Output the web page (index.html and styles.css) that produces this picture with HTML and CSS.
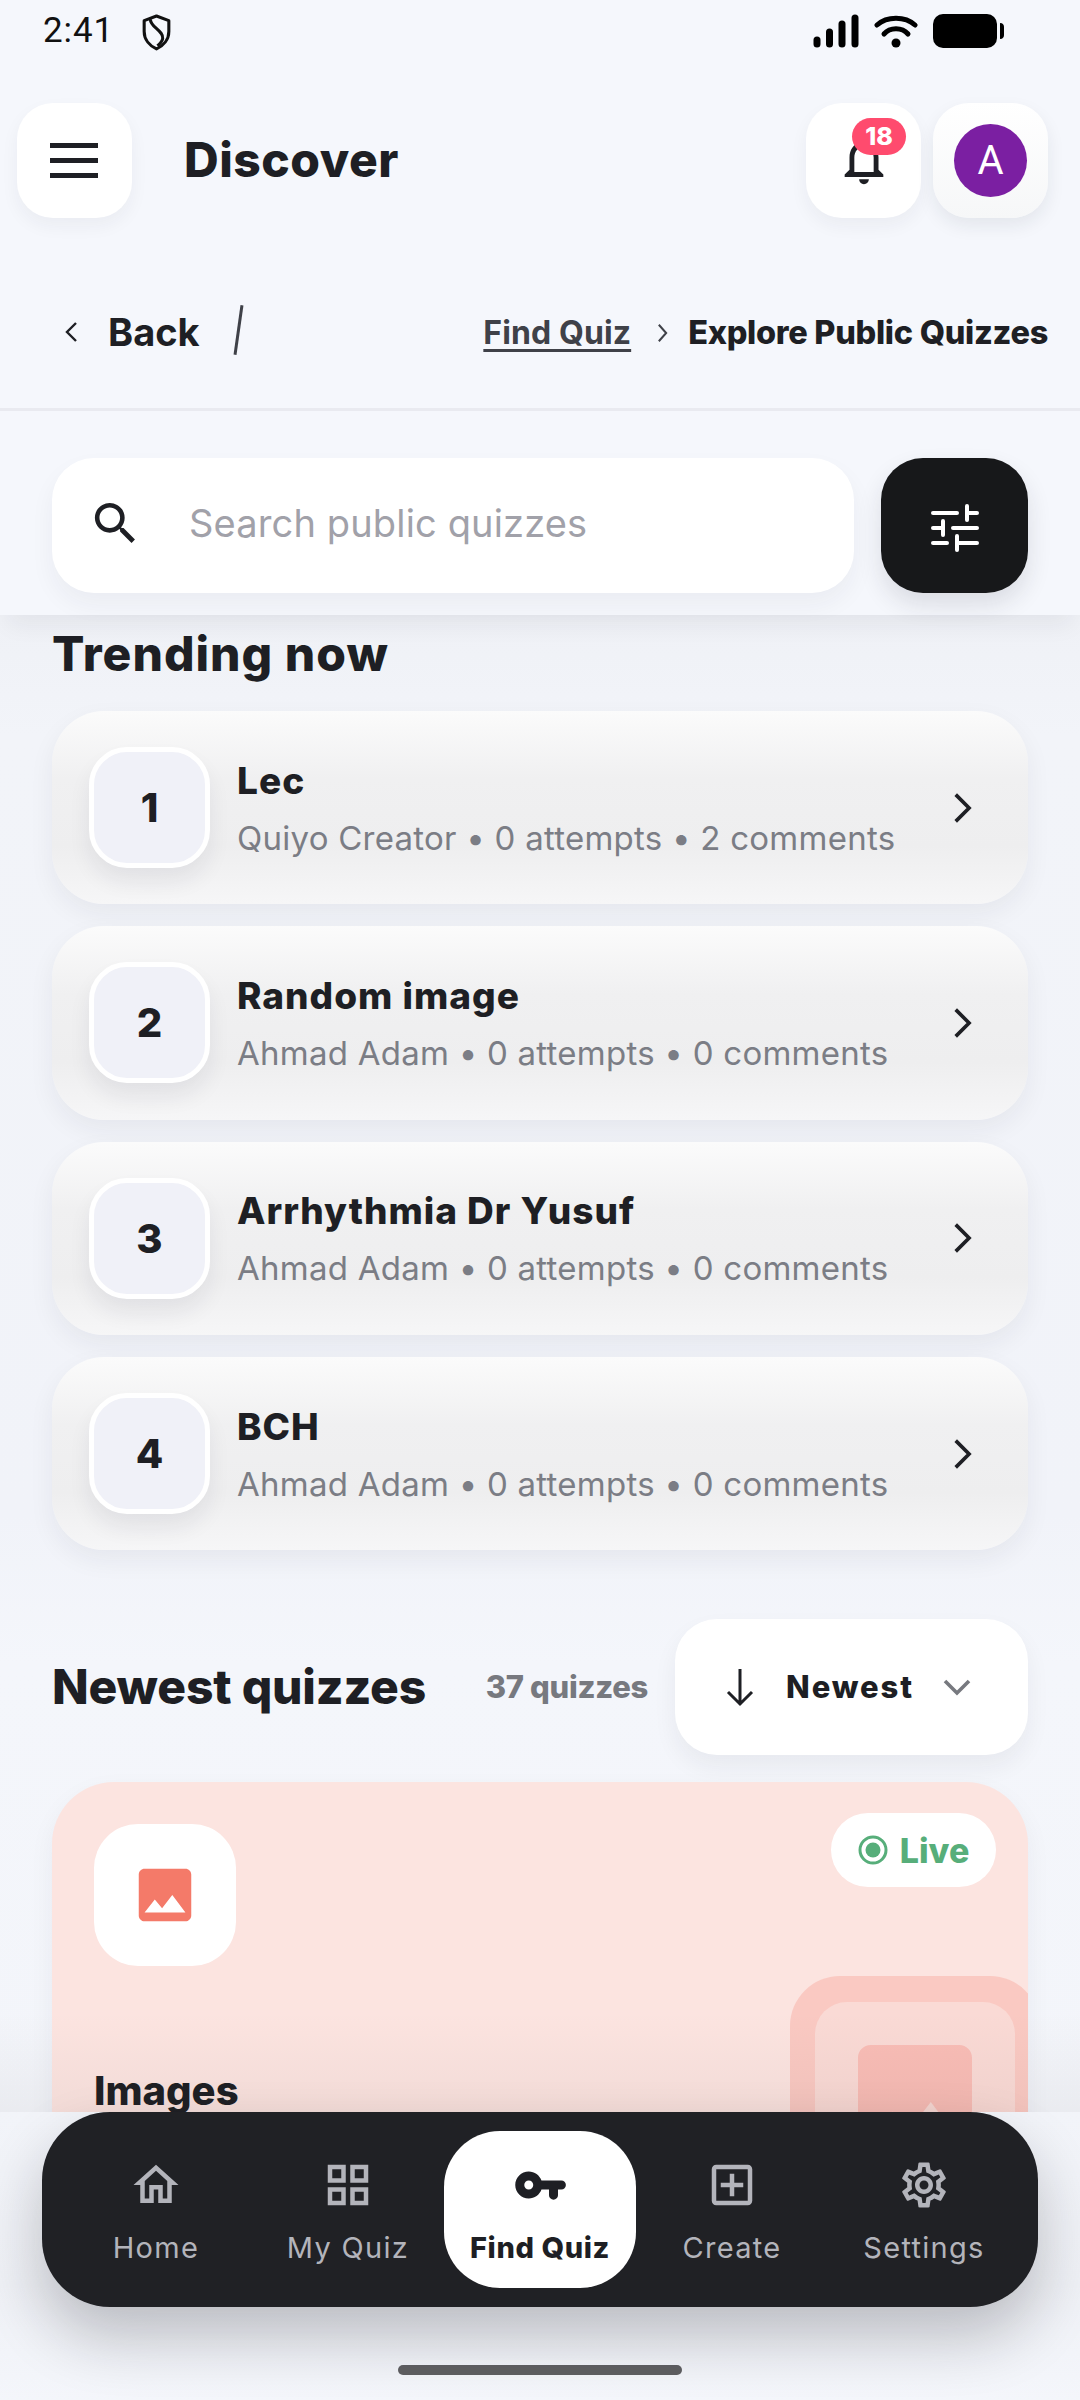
FILE: index.html
```html
<!DOCTYPE html>
<html lang="en">
<head>
<meta charset="utf-8">
<title>Discover</title>
<link rel="stylesheet" href="styles.css">
</head>
<body>
<div class="app">
  <div class="status">
    <div class="status-left">
      <span class="time">2:41</span>
      <svg class="shield" viewBox="0 0 30 36"><path d="M15 2 L27 6.5 V17 C27 25 21.500 31 15 34 C8.500 31 3 25 3 17 V6.500 Z" fill="none" stroke="#111" stroke-width="3" stroke-linejoin="round"/><path d="M9 5 C9 13 22 16 21 24 C20.700 27 18 29 16 31" fill="none" stroke="#111" stroke-width="3"/></svg>
    </div>
    <div class="status-right">
      <svg class="signal" viewBox="0 0 46 34"><g stroke="#000" stroke-width="7" stroke-linecap="round"><path d="M4 26V30"/><path d="M16.500 18V30"/><path d="M29 10V30"/><path d="M42 4V30"/></g></svg>
      <svg class="wifi" viewBox="0 0 44 34"><g fill="none" stroke="#000" stroke-linecap="round"><path d="M3 11 C13 2 31 2 41 11" stroke-width="5"/><path d="M10 20 C16 13 28 13 34 20" stroke-width="5"/></g><circle cx="22" cy="29" r="4.500" fill="#000"/></svg>
      <svg class="battery" viewBox="0 0 72 34"><rect x="0" y="0" width="64" height="34" rx="10" fill="#000"/><path d="M67 9 C70 9 71 11 71 13 V21 C71 23 70 25 67 25 Z" fill="#000"/></svg>
    </div>
  </div>

  <header class="topbar">
    <button class="tile tile-menu" aria-label="Menu"><span class="bars"><i></i><i></i><i></i></span></button>
    <h1 class="page-title">Discover</h1>
    <div class="top-actions">
      <button class="tile tile-bell" aria-label="Notifications">
        <svg class="bell" viewBox="0 0 24 24"><path d="M12 22c1.100 0 2-.9 2-2h-4c0 1.100.9 2 2 2zm6-6v-5c0-3.070-1.640-5.640-4.500-6.320V4c0-.83-.67-1.500-1.500-1.500s-1.500.67-1.500 1.500v.68C7.630 5.360 6 7.920 6 11v5l-2 2v1h16v-1l-2-2zm-2 1H8v-6c0-2.480 1.510-4.500 4-4.500s4 2.020 4 4.500v6z"/></svg>
        <span class="badge">18</span>
      </button>
      <button class="tile tile-avatar" aria-label="Account"><span class="avatar">A</span></button>
    </div>
  </header>

  <nav class="crumbs">
    <div class="crumbs-left">
      <svg class="chev-back" viewBox="0 0 14 24"><path d="M12 3 L3 12 L12 21" fill="none" stroke="#1e1f24" stroke-width="2.400"/></svg>
      <span class="back">Back</span>
      <span class="slash"></span>
    </div>
    <div class="crumbs-right">
      <span class="crumb-link">Find Quiz</span>
      <svg class="chev-crumb" viewBox="0 0 14 24"><path d="M3 3 L11 12 L3 21" fill="none" stroke="#3f4148" stroke-width="2.200"/></svg>
      <span class="crumb-current">Explore Public Quizzes</span>
    </div>
  </nav>

  <section class="search-row">
    <div class="search">
      <svg class="search-icon" viewBox="0 0 24 24"><path d="M15.500 14h-.79l-.28-.27C15.410 12.590 16 11.110 16 9.500 16 5.910 13.090 3 9.500 3S3 5.910 3 9.500 5.910 16 9.500 16c1.610 0 3.090-.59 4.230-1.570l.27.28v.79l5 4.990L20.490 19l-4.990-5zm-6 0C7.010 14 5 11.990 5 9.500S7.010 5 9.500 5 14 7.010 14 9.500 11.990 14 9.500 14z"/></svg>
      <span class="placeholder">Search public quizzes</span>
    </div>
    <button class="filter" aria-label="Filter">
      <svg viewBox="0 0 48 48"><g stroke="#fff" stroke-width="4" stroke-linecap="round" fill="none"><path d="M2 11H26"/><path d="M36 11H46"/><path d="M36 4V18"/><path d="M2 26H12"/><path d="M22 26H46"/><path d="M12 19V33"/><path d="M2 41H16"/><path d="M26 41H46"/><path d="M26 34V48"/></g></svg>
    </button>
  </section>

  <main class="scroll">
    <h2 class="section-title trending-title">Trending now</h2>
    <div class="trend-list">
      <article class="trend">
        <div class="rank">1</div>
        <div class="trend-body"><h3>Lec</h3><p>Quiyo Creator • 0 attempts • 2 comments</p></div>
        <svg class="chev-row" viewBox="0 0 18 28"><path d="M3 3 L14 14 L3 25" fill="none" stroke="#1e1f24" stroke-width="3"/></svg>
      </article>
      <article class="trend">
        <div class="rank">2</div>
        <div class="trend-body"><h3>Random image</h3><p>Ahmad Adam • 0 attempts • 0 comments</p></div>
        <svg class="chev-row" viewBox="0 0 18 28"><path d="M3 3 L14 14 L3 25" fill="none" stroke="#1e1f24" stroke-width="3"/></svg>
      </article>
      <article class="trend">
        <div class="rank">3</div>
        <div class="trend-body"><h3>Arrhythmia Dr Yusuf</h3><p>Ahmad Adam • 0 attempts • 0 comments</p></div>
        <svg class="chev-row" viewBox="0 0 18 28"><path d="M3 3 L14 14 L3 25" fill="none" stroke="#1e1f24" stroke-width="3"/></svg>
      </article>
      <article class="trend">
        <div class="rank">4</div>
        <div class="trend-body"><h3>BCH</h3><p>Ahmad Adam • 0 attempts • 0 comments</p></div>
        <svg class="chev-row" viewBox="0 0 18 28"><path d="M3 3 L14 14 L3 25" fill="none" stroke="#1e1f24" stroke-width="3"/></svg>
      </article>
    </div>

    <div class="newest-head">
      <h2 class="section-title">Newest quizzes</h2>
      <span class="count">37 quizzes</span>
      <button class="sort">
        <svg class="sort-arrow" viewBox="0 0 32 40"><path d="M16 2V36M4 25 L16 37 L28 25" fill="none" stroke="#1e1f24" stroke-width="3"/></svg>
        <span class="sort-label">Newest</span>
        <svg class="sort-chev" viewBox="0 0 28 18"><path d="M2 3 L14 15 L26 3" fill="none" stroke="#77797f" stroke-width="3.600"/></svg>
      </button>
    </div>

    <article class="quiz">
      <div class="quiz-top">
        <div class="quiz-icon">
          <svg viewBox="0 0 24 24"><path d="M21 19V5c0-1.100-.9-2-2-2H5c-1.100 0-2 .9-2 2v14c0 1.100.9 2 2 2h14c1.100 0 2-.9 2-2zM8.500 13.500l2.500 3.010L14.500 12l4.500 6H5l3.500-4.500z"/></svg>
        </div>
        <span class="live">
          <svg viewBox="0 0 30 30"><circle cx="15" cy="15" r="13" fill="none" stroke="#57ae7a" stroke-width="3"/><circle cx="15" cy="15" r="7.500" fill="#57ae7a"/></svg>
          Live
        </span>
      </div>
      <div class="art" aria-hidden="true">
        <div class="art-inner">
          <svg viewBox="0 0 24 24"><path d="M21 19V5c0-1.100-.9-2-2-2H5c-1.100 0-2 .9-2 2v14c0 1.100.9 2 2 2h14c1.100 0 2-.9 2-2zM8.500 13.500l2.500 3.010L14.500 12l4.500 6H5l3.500-4.500z"/></svg>
        </div>
      </div>
      <h3 class="quiz-title">Images</h3>
    </article>
  </main>

  <footer class="dock">
    <div class="tabs">
      <a class="tab">
        <svg viewBox="0 0 24 24"><path d="M12 5.690l5 4.500V18h-2v-6H9v6H7v-7.810l5-4.500M12 3L2 12h3v8h6v-6h2v6h6v-8h3L12 3z"/></svg>
        <span>Home</span>
      </a>
      <a class="tab">
        <svg viewBox="0 0 24 24"><path d="M3 3v8h8V3H3zm6 6H5V5h4v4zm-6 4v8h8v-8H3zm6 6H5v-4h4v4zm4-16v8h8V3h-8zm6 6h-4V5h4v4zm-6 4v8h8v-8h-8zm6 6h-4v-4h4v4z"/></svg>
        <span>My Quiz</span>
      </a>
      <a class="tab tab-active">
        <svg viewBox="0 0 24 24"><path d="M12.650 10C11.830 7.670 9.610 6 7 6c-3.310 0-6 2.690-6 6s2.690 6 6 6c2.610 0 4.830-1.670 5.650-4H16v2.500a2 2 0 0 0 4 0V14h1.500a2 2 0 0 0 0-4H12.650zM7 14c-1.100 0-2-.9-2-2s.9-2 2-2 2 .9 2 2-.9 2-2 2z"/></svg>
        <span>Find Quiz</span>
      </a>
      <a class="tab">
        <svg viewBox="0 0 24 24"><path d="M19 3H5c-1.100 0-2 .9-2 2v14c0 1.100.9 2 2 2h14c1.100 0 2-.9 2-2V5c0-1.100-.9-2-2-2zm0 16H5V5h14v14zm-8-2h2v-4h4v-2h-4V7h-2v4H7v2h4z"/></svg>
        <span>Create</span>
      </a>
      <a class="tab">
        <svg viewBox="0 0 24 24"><path d="M19.430 12.980c.04-.32.07-.64.07-.98 0-.34-.03-.66-.07-.98l2.110-1.650c.19-.15.24-.42.12-.64l-2-3.460c-.09-.16-.26-.25-.44-.25-.06 0-.12.01-.17.03l-2.490 1c-.52-.4-1.080-.73-1.690-.98l-.38-2.650C14.460 2.180 14.250 2 14 2h-4c-.25 0-.46.18-.49.42l-.38 2.650c-.61.25-1.170.59-1.690.98l-2.490-1c-.06-.02-.12-.03-.18-.03-.17 0-.34.09-.43.25l-2 3.460c-.13.22-.07.49.12.64l2.110 1.650c-.04.32-.07.65-.07.98 0 .33.03.66.07.98l-2.110 1.650c-.19.15-.24.42-.12.64l2 3.460c.09.16.26.25.44.25.06 0 .12-.01.17-.03l2.490-1c.52.4 1.080.73 1.690.98l.38 2.650c.03.24.24.42.49.42h4c.25 0 .46-.18.49-.42l.38-2.650c.61-.25 1.170-.59 1.690-.98l2.490 1c.06.02.12.03.18.03.17 0 .34-.09.43-.25l2-3.460c.12-.22.07-.49-.12-.64l-2.110-1.650zm-1.980-1.710c.04.31.05.52.05.73 0 .21-.02.43-.05.73l-.14 1.130.89.7 1.080.84-.7 1.210-1.270-.51-1.040-.42-.9.68c-.43.32-.84.56-1.250.73l-1.060.43-.16 1.130-.2 1.350h-1.400l-.19-1.350-.16-1.130-1.060-.43c-.43-.18-.83-.41-1.230-.71l-.91-.7-1.060.43-1.270.51-.7-1.210 1.080-.84.89-.7-.14-1.130c-.03-.31-.05-.54-.05-.74s.02-.43.05-.73l.14-1.130-.89-.7-1.080-.84.7-1.210 1.270.51 1.040.42.9-.68c.43-.32.84-.56 1.250-.73l1.060-.43.16-1.130.2-1.350h1.390l.19 1.350.16 1.130 1.060.43c.43.18.83.41 1.230.71l.91.7 1.060-.43 1.270-.51.7 1.210-1.070.85-.89.7.14 1.130zM12 8c-2.210 0-4 1.790-4 4s1.790 4 4 4 4-1.790 4-4-1.790-4-4-4zm0 6c-1.100 0-2-.9-2-2s.9-2 2-2 2 .9 2 2-.9 2-2 2z"/></svg>
        <span>Settings</span>
      </a>
    </div>
    <div class="home-bar"></div>
  </footer>
</div>
</body>
</html>
```
FILE: styles.css
```css
* { box-sizing: border-box; }
html, body { margin: 0; padding: 0; }
body { background: #f5f7fc; font-family: "Inter", "Noto Sans", sans-serif; color: #1e1f24; }
button { border: 0; padding: 0; font: inherit; color: inherit; background: none; }
h1, h2, h3, p { margin: 0; }

.app { width: 1080px; height: 2400px; display: flex; flex-direction: column; overflow: hidden; background: #f5f7fc; }

/* status bar */
.status { height: 60px; flex: none; display: flex; justify-content: space-between; padding: 14px 75px 0 43px; }
.status-left { display: flex; align-items: flex-start; gap: 27px; }
.time { font-family: "Roboto", sans-serif; font-size: 35px; line-height: 34px; color: #111; letter-spacing: .9px; }
.shield { width: 31px; height: 37px; }
.status-right { display: flex; align-items: flex-start; gap: 15px; }
.signal { width: 46px; height: 34px; }
.wifi { width: 44px; height: 34px; }
.battery { width: 72px; height: 34px; }

/* top bar */
.topbar { height: 114px; margin-top: 43px; flex: none; display: flex; align-items: center; padding: 0 32px 0 17px; }
.tile { width: 115px; height: 115px; border-radius: 36px; background: #fff; box-shadow: 0 8px 18px rgba(30, 32, 50, .05); display: flex; align-items: center; justify-content: center; position: relative; flex: none; }
.bars { display: flex; flex-direction: column; gap: 10px; width: 48px; margin-left: -2px; }
.bars i { display: block; height: 5px; background: #1e1f24; }
.page-title { font-size: 48px; line-height: 60px; font-weight: 800; margin-left: 52px; letter-spacing: .5px; color: #1e1f24; }
.top-actions { margin-left: auto; display: flex; gap: 12px; }
.bell { width: 58px; height: 58px; fill: #1e1f24; flex: none; }
.badge { position: absolute; left: 46px; top: 15px; width: 54px; height: 37px; border-radius: 19px; background: #ff4b6e; color: #fff; font-size: 25px; line-height: 37px; font-weight: 800; text-align: center; }
.tile-avatar { background: linear-gradient(#fff, #f6f7f8); box-shadow: 0 8px 18px rgba(30, 32, 50, .08); }
.avatar { width: 73px; height: 73px; border-radius: 50%; background: #7b1fa2; color: #fff; font-family: "Roboto", sans-serif; font-size: 40px; line-height: 73px; text-align: center; }

/* breadcrumb */
.crumbs { height: 194px; flex: none; border-bottom: 3px solid #e9eaf0; display: flex; align-items: center; justify-content: space-between; padding: 77px 32px 39px 64px; }
.crumbs-left { display: flex; align-items: center; }
.chev-back { width: 14px; height: 24px; }
.back { font-size: 38px; line-height: 48px; font-weight: 700; margin-left: 30px; color: #1e1f24; }
.slash { width: 3px; height: 50px; background: #3f4148; transform: rotate(8deg); margin-left: 37px; margin-top: -4px; }
.crumbs-right { display: flex; align-items: center; padding-top: 3px; }
.crumb-link { font-size: 32px; line-height: 44px; font-weight: 700; color: #3f4148; text-decoration: underline; text-underline-offset: 5px; letter-spacing: .1px; }
.chev-crumb { width: 13px; height: 22px; margin: 0 19px 0 25px; }
.crumb-current { font-size: 32.500px; line-height: 44px; font-weight: 800; color: #1e1f24; letter-spacing: -.3px; }

/* search */
.search-row { height: 204px; flex: none; padding: 47px 52px 22px; display: flex; gap: 27px; background: #f5f7fc; box-shadow: 0 18px 22px -8px rgba(30, 32, 50, .06); position: relative; z-index: 2; }
.search { flex: 1; height: 135px; border-radius: 42px; background: #fff; display: flex; align-items: center; padding-left: 36px; box-shadow: 0 12px 24px rgba(30, 32, 50, .05); }
.search-icon { width: 55px; height: 55px; fill: #1e1f24; margin-top: -4px; }
.placeholder { font-size: 38px; line-height: 48px; color: #a1a1a9; margin: -5px 0 0 46px; letter-spacing: .15px; }
.filter { width: 147px; height: 135px; border-radius: 42px; background: #17181a; display: flex; align-items: center; justify-content: center; box-shadow: 0 12px 24px rgba(30, 32, 50, .12); }
.filter svg { width: 48px; height: 48px; overflow: visible; }

/* scroll area */
.scroll { flex: 1; min-height: 0; overflow: hidden; padding: 4px 52px 0; background: linear-gradient(#eff1f6, #f2f4f9 120px, #f1f3f9 900px, #f4f6fb 1050px, #f3f5fa); }
.section-title { font-size: 48px; line-height: 70px; font-weight: 800; color: #1e1f24; white-space: nowrap; letter-spacing: -.2px; }
.trending-title { margin-bottom: 22px; letter-spacing: 1px; }
.trend-list { display: flex; flex-direction: column; gap: 22px; }
.trend { height: 193.300px; border-radius: 52px; background: linear-gradient(#fbfbfb, #f0f0f1 35%, #eeeeef 70%, #f6f6f7); box-shadow: 0 10px 26px rgba(30, 32, 50, .06); display: flex; align-items: center; padding: 0 54px 0 37px; }
.rank { width: 121px; height: 121px; flex: none; border-radius: 38px; border: 5px solid #fff; background: #f0f1f8; font-size: 40px; line-height: 111px; font-weight: 800; text-align: center; box-shadow: 0 14px 22px rgba(30, 32, 50, .07); }
.trend-body { flex: 1; padding-left: 27px; }
.trend-body h3 { font-size: 37px; line-height: 46px; font-weight: 800; color: #1e1f24; letter-spacing: 1px; padding-top: 1px; }
.trend-body p { font-size: 33px; line-height: 42px; margin-top: 13px; color: #7b7d85; white-space: nowrap; letter-spacing: .25px; }
.chev-row { width: 22px; height: 34px; flex: none; }

.newest-head { height: 136px; margin-top: 69px; display: flex; align-items: center; }
.count { font-size: 31px; line-height: 40px; font-weight: 800; color: #77797f; margin-left: auto; margin-right: 27px; letter-spacing: -.3px; }
.sort { width: 353px; height: 136px; border-radius: 42px; background: #fff; box-shadow: 0 12px 24px rgba(30, 32, 50, .06); display: flex; align-items: center; padding-left: 49px; }
.sort-arrow { width: 32px; height: 40px; }
.sort-label { font-size: 31px; line-height: 40px; font-weight: 800; margin-left: 30px; letter-spacing: 1.900px; }
.sort-chev { width: 28px; height: 18px; margin-left: 29px; }

.quiz { height: 520px; margin-top: 27px; border-radius: 62px; background: #fce4e0; position: relative; overflow: hidden; padding: 31px 32px 0 42px; box-shadow: 0 10px 26px rgba(30, 32, 50, .05); }
.quiz-top { display: flex; justify-content: space-between; align-items: flex-start; }
.quiz-icon { width: 142px; height: 142px; margin-top: 11px; border-radius: 44px; background: #fff; display: flex; align-items: center; justify-content: center; }
.quiz-icon svg { width: 70px; height: 70px; fill: #f47a69; }
.live { width: 165px; height: 74px; border-radius: 37px; background: #fff; display: flex; align-items: center; justify-content: center; gap: 12px; font-size: 34px; font-weight: 800; color: #57ae7a; }
.live svg { width: 30px; height: 30px; }
.art { position: absolute; left: 738px; top: 194px; width: 250px; height: 250px; border-radius: 50px; background: #fac9c2; padding: 26px 25px; }
.art-inner { height: 240px; border-radius: 32px; background: #fadad5; display: flex; justify-content: center; padding-top: 24px; }
.art-inner svg { width: 152px; height: 152px; fill: #f9bdb6; flex: none; }
.quiz-title { margin-top: 102px; font-size: 40px; line-height: 46px; font-weight: 800; color: #1e1f24; }

/* dock */
.dock { height: 288px; flex: none; position: relative; z-index: 3; padding: 0 42px; background: linear-gradient(#f2f4f9, #eff1f6 60%, #f4f6fb); }
.dock::before { content: ""; position: absolute; left: 0; right: 0; top: -100px; height: 100px; background: linear-gradient(rgba(60, 50, 50, 0), rgba(60, 50, 50, .05)); pointer-events: none; }
.tabs { height: 195px; border-radius: 68px; background: #202125; padding: 19px 18px; display: flex; box-shadow: 0 30px 60px rgba(20, 20, 30, .24); position: relative; }
.tab { flex: 1; height: 157px; border-radius: 56px; display: flex; flex-direction: column; align-items: center; color: #b3b4bb; font-size: 29px; line-height: 38px; letter-spacing: 1.300px; white-space: nowrap; padding-top: 27px; }
.tab svg { width: 54px; height: 54px; fill: #b3b4bb; flex: none; }
.tab span { margin-top: 17px; }
.tab-active { background: #fff; color: #1e1f24; font-weight: 800; letter-spacing: .6px; }
.tab-active svg { fill: #1e1f24; }
.home-bar { width: 284px; height: 10px; border-radius: 5px; background: #5f5f62; margin: 58px auto 0; }
```
